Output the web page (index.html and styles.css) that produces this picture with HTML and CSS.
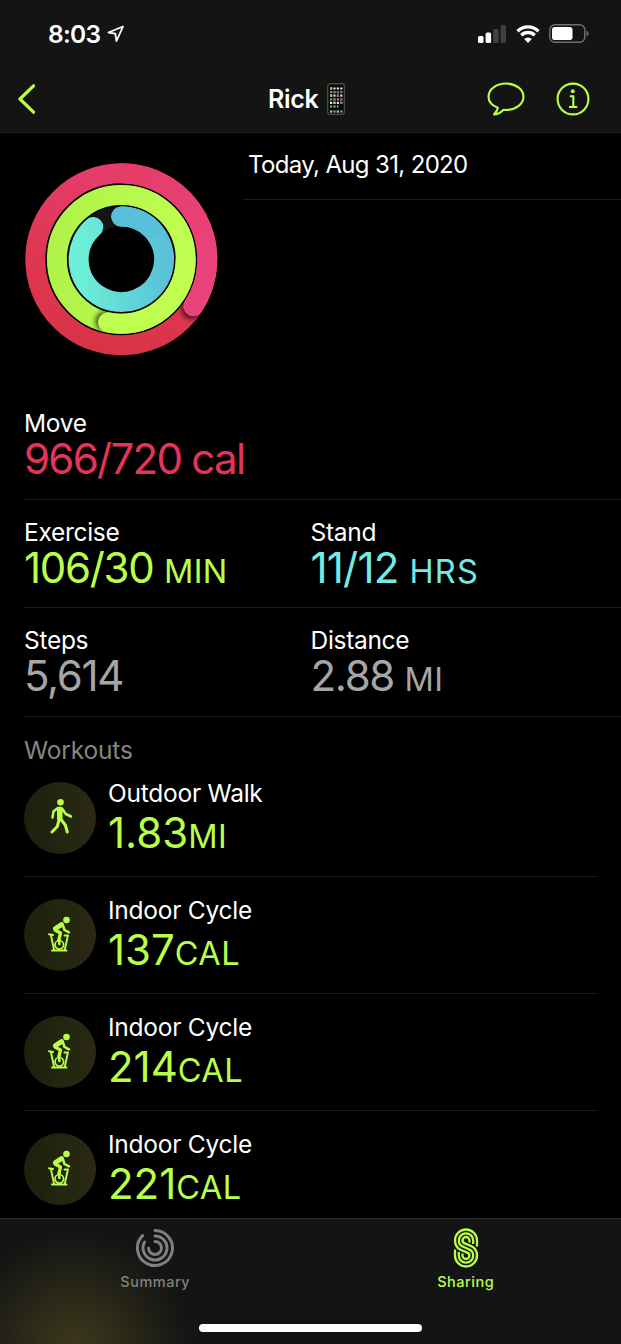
FILE: index.html
```html
<!DOCTYPE html>
<html lang="en">
<head>
  <meta charset="UTF-8">
  <title>Activity Sharing</title>
  <meta name="viewport" content="width=device-width, initial-scale=1.0">
  <link rel="stylesheet" href="styles.css">
</head>
<body>
  <svg class="defs" width="0" height="0">
    <symbol id="bike" viewBox="0 0 24 36">
      <circle cx="18.500" cy="4" r="3.300" fill="currentColor"/>
      <g fill="none" stroke="currentColor" stroke-linecap="round" stroke-linejoin="round">
        <path d="M13.500 8.700 7.500 12.500" stroke-width="5"/>
        <path d="M15 9.500 16.500 14l4.500 2.300" stroke-width="2.500"/>
        <path d="M7 14l5.500 3-1.700 7" stroke-width="3.200"/>
        <path d="M1 18.300l4 .7M3 19.500l3 14M19.800 20l-3 13.500M16.500 19.500h3.500M4 34.500h14.500" stroke-width="1.900"/>
        <circle cx="11.300" cy="28.800" r="4.300" stroke-width="1.700"/>
        <path d="M11.300 22v6" stroke-width="2.500"/>
      </g>
    </symbol>
  </svg>

  <header class="top">
    <div class="status">
      <span class="time">8:03</span>
      <svg class="arrow" width="18" height="18" viewBox="0 0 18 18"><path d="M1.500 7.500 16 1.500 9.500 16 8.300 8.700Z" fill="none" stroke="#fff" stroke-width="1.800" stroke-linejoin="round"/></svg>
      <svg class="signal" width="28" height="18" viewBox="0 0 28 18">
        <rect x="0" y="11" width="5.500" height="7" rx="1.500" fill="#fff"/>
        <rect x="7.600" y="7.500" width="5.500" height="10.500" rx="1.500" fill="#fff"/>
        <rect x="15.200" y="4" width="5.500" height="14" rx="1.500" fill="#3f4141"/>
        <rect x="22.600" y="0" width="5.400" height="18" rx="1.500" fill="#3f4141"/>
      </svg>
      <svg class="wifi" width="24" height="18" viewBox="0 0 24 18">
        <path d="M1.500 6.200a15 15 0 0 1 21 0M5.300 10.200a9.600 9.600 0 0 1 13.400 0" fill="none" stroke="#fff" stroke-width="3.300"/>
        <path d="M12 18 8.200 14.100a5.500 5.500 0 0 1 7.600 0Z" fill="#fff"/>
      </svg>
      <svg class="battery" width="40" height="20" viewBox="0 0 40 20">
        <rect x=".8" y=".8" width="35" height="17.500" rx="5" fill="none" stroke="#717171" stroke-width="1.400"/>
        <rect x="3" y="3" width="20.500" height="13" rx="2.800" fill="#fff"/>
        <path d="M37.500 6.500v6q2-.8 2-3t-2-3Z" fill="#717171"/>
      </svg>
    </div>
    <nav class="nav">
      <svg class="back" width="18" height="30" viewBox="0 0 18 30"><path d="M16.500 1.800 3 15l13.500 13.200" fill="none" stroke="currentColor" stroke-width="3.200" stroke-linecap="round" stroke-linejoin="round"/></svg>
      <h1>Rick</h1>
      <svg class="phone" width="18" height="32" viewBox="0 0 18 32">
        <rect x=".7" y=".7" width="16.600" height="30.600" rx="2.500" fill="#050505" stroke="#474b4b" stroke-width="1.400"/>
        <g fill="none" stroke-width="2.200">
          <path d="M3 5.500h12.500" stroke="#e8e8e8" stroke-dasharray="2.200 1.200"/>
          <path d="M3 9.100h12.500" stroke="#659fa5" stroke-dasharray="2.200 1.200"/>
          <path d="M3 12.700h12.500" stroke="#ddd" stroke-dasharray="2.200 1.200"/>
          <path d="M3 16.300h12.500" stroke="#59a7ae" stroke-dasharray="2.200 1.200"/>
          <path d="M3 19.900h12.500" stroke="#ddd" stroke-dasharray="2.200 1.200"/>
          <path d="M3 23.500h8.500" stroke="#62b8c0" stroke-dasharray="2.200 1.200"/>
          <path d="M3 28.500h12.500" stroke="#72b7b9" stroke-dasharray="2.200 1.200"/>
          <path d="M3 5.500h2.200M3 12.700h2.200M6.400 19.900h2.200M3 28.500h2.200M9.800 28.500h2.200" stroke="#9bc63f"/>
          <path d="M9.800 12.700h2.200M13.200 16.300h2.200M6.400 23.500h2.200" stroke="#e33759"/>
          <path d="M6.400 9.100h5.600M6.400 16.300h2.200M13.200 19.900h2.200" stroke="#777" stroke-dasharray="2.200 1.200"/>
        </g>
      </svg>
      <svg class="bubble" width="38" height="34" viewBox="0 0 38 34"><path d="M10.800 25.800C5 23.500 1.500 19.500 1.500 14.800 1.500 7.400 9.300 1.500 19 1.500s17.500 5.900 17.500 13.300S28.700 28 19 28c-1 0-1.800 0-2.700-.1-2.300 2.300-5.800 4.300-9.300 4.500 1.800-2 3.500-4.200 3.800-6.600Z" fill="none" stroke="currentColor" stroke-width="2.100" stroke-linejoin="round"/></svg>
      <svg class="info" width="34" height="34" viewBox="0 0 34 34">
        <circle cx="17" cy="17" r="15.400" fill="none" stroke="currentColor" stroke-width="2.100"/>
        <circle cx="16.800" cy="9.300" r="2" fill="currentColor"/>
        <path d="M13.800 14.300h3.500v10.200M13 25h8.300" fill="none" stroke="currentColor" stroke-width="2.100"/>
      </svg>
    </nav>
  </header>

  <main>
    <section class="hero">
      <svg class="rings" width="194" height="194" viewBox="-97.300 -97.300 194 194">
        <defs>
          <linearGradient id="move" gradientUnits="userSpaceOnUse" x1="0" y1="96" x2="40" y2="-96">
            <stop offset="0" stop-color="#d93348"/>
            <stop offset=".35" stop-color="#de3650"/>
            <stop offset="1" stop-color="#e73d6f"/>
          </linearGradient>
          <linearGradient id="moveEnd" gradientUnits="userSpaceOnUse" x1="0" y1="-86" x2="70" y2="0">
            <stop offset="0" stop-color="#e63c69"/>
            <stop offset="1" stop-color="#ea427a"/>
          </linearGradient>
          <linearGradient id="exercise" gradientUnits="userSpaceOnUse" x1="-75" y1="0" x2="65" y2="20">
            <stop offset="0" stop-color="#aff249"/>
            <stop offset="1" stop-color="#bfff50"/>
          </linearGradient>
          <linearGradient id="stand" gradientUnits="userSpaceOnUse" x1="-40" y1="0" x2="45" y2="0">
            <stop offset="0" stop-color="#6cefd6"/>
            <stop offset="1" stop-color="#5ac1da"/>
          </linearGradient>
          <filter id="soft" x="-50%" y="-50%" width="200%" height="200%"><feGaussianBlur stdDeviation="2.500"/></filter>
          <mask id="moveTrack" maskUnits="userSpaceOnUse" x="-97" y="-97" width="194" height="194"><circle r="86" fill="none" stroke="#fff" stroke-width="20"/></mask>
          <mask id="exerciseTrack" maskUnits="userSpaceOnUse" x="-97" y="-97" width="194" height="194"><circle r="64.400" fill="none" stroke="#fff" stroke-width="20"/></mask>
        </defs>
        <g fill="none" stroke-width="20" stroke-linecap="round">
          <circle r="86" stroke="url(#move)"/>
          <circle cx="70" cy="50" r="10" fill="#000" opacity=".65" filter="url(#soft)" mask="url(#moveTrack)"/>
          <path d="M0-86A86 86 0 0 1 72 47" stroke="url(#moveEnd)"/>
          <circle r="64.400" stroke="url(#exercise)"/>
          <circle cx="-16" cy="62" r="10" fill="#000" opacity=".65" filter="url(#soft)" mask="url(#exerciseTrack)"/>
          <path d="M64.400 0A64.400 64.400 0 0 1-13.200 63" stroke="#c0ff50"/>
          <circle r="42.700" stroke="#141414"/>
          <path d="M0-42.700A42.700 42.700 0 1 1-28-32.200" stroke="url(#stand)"/>
          <path d="M0-42.700A42.700 42.700 0 0 1 30.200-30.200" stroke="#59c0db"/>
        </g>
      </svg>
      <p class="date">Today, Aug 31, 2020</p>
    </section>

    <section class="stats">
      <div class="stat-row">
        <div class="stat move"><h2>Move</h2><p>966/720 cal</p></div>
      </div>
      <div class="stat-row">
        <div class="stat exercise"><h2>Exercise</h2><p>106/30 <small>MIN</small></p></div>
        <div class="stat stand"><h2>Stand</h2><p>11/12 <small>HRS</small></p></div>
      </div>
      <div class="stat-row">
        <div class="stat steps"><h2>Steps</h2><p>5,614</p></div>
        <div class="stat distance"><h2>Distance</h2><p>2.88 <small>MI</small></p></div>
      </div>
    </section>

    <section class="workouts">
      <h2>Workouts</h2>
      <div class="workout">
        <div class="badge">
          <svg class="walk" width="24" height="36" viewBox="0 0 24 36">
            <circle cx="12.500" cy="3.300" r="3.300" fill="currentColor"/>
            <g fill="none" stroke="currentColor" stroke-linecap="round" stroke-linejoin="round">
              <path d="M11.800 10.300v9" stroke-width="5.500"/>
              <path d="M9.500 9.300 5.500 12.500l-1 6M14 9.500l3.800 5.500 5.200 2.500" stroke-width="2.500"/>
              <path d="M11 21 9.300 27.500 4 33M13 20.500l4.300 5.500 2 7" stroke-width="3"/>
            </g>
          </svg>
        </div>
        <div class="workout-text"><h3>Outdoor Walk</h3><p>1.83<small>MI</small></p></div>
      </div>
      <div class="workout">
        <div class="badge"><svg class="cycle" width="24" height="36"><use href="#bike"/></svg></div>
        <div class="workout-text"><h3>Indoor Cycle</h3><p>137<small>CAL</small></p></div>
      </div>
      <div class="workout">
        <div class="badge"><svg class="cycle" width="24" height="36"><use href="#bike"/></svg></div>
        <div class="workout-text"><h3>Indoor Cycle</h3><p>214<small>CAL</small></p></div>
      </div>
      <div class="workout">
        <div class="badge"><svg class="cycle" width="24" height="36"><use href="#bike"/></svg></div>
        <div class="workout-text"><h3>Indoor Cycle</h3><p>221<small>CAL</small></p></div>
      </div>
    </section>
  </main>

  <footer class="tabs">
    <div class="tab">
      <svg width="40" height="40" viewBox="-20 -20 40 40">
        <g fill="none" stroke="currentColor" stroke-width="3" stroke-linecap="round">
          <path d="M0-17.500A17.500 17.500 0 1 1-12.400-12.400"/>
          <path d="M0-12A12 12 0 1 1-10.400-6"/>
          <path d="M0-6.500A6.500 6.500 0 1 1-6.500 0"/>
        </g>
      </svg>
      <span>Summary</span>
    </div>
    <div class="tab active">
      <svg width="26" height="40" viewBox="0 0 26 40">
        <g fill="none" stroke="currentColor" stroke-width="2.300">
          <path d="M24 18.500V12.500A11 11 0 0 0 2 12.500C2 20 7 21.800 11.200 23.300 15 24.800 16.500 25 16.500 27.500A3.500 3.500 0 0 1 9.500 27.500V25.500"/>
          <path d="M20.200 16V12.500A7.200 7.200 0 0 0 5.800 12.500C5.800 17.500 9 18.300 13 20S20.200 22.500 20.200 27.500A7.200 7.200 0 0 1 5.800 27.500V24"/>
          <path d="M16.500 14.500V12.500A3.500 3.500 0 0 0 9.500 12.500C9.500 15 11 15.200 14.800 16.700 19 18.200 24 20 24 27.500A11 11 0 0 1 2 27.500V21.500"/>
        </g>
      </svg>
      <span>Sharing</span>
    </div>
    <div class="home-bar"></div>
  </footer>
</body>
</html>
```
FILE: styles.css
```css
* {
  box-sizing: border-box;
}
body {
  margin: 0;
  height: 1344px;
  display: flex;
  flex-direction: column;
  overflow: hidden;
  background: #000;
  color: #fff;
  font-family: Inter, "Liberation Sans", sans-serif;
}
h1, h2, h3, p {
  margin: 0;
  font-weight: 400;
}
svg {
  display: block;
  flex: none;
}
.defs {
  position: absolute;
}

/* header */
.top {
  flex: none;
  height: 133px;
  background: #141414;
  border-bottom: 1px solid #1b1b1b;
}
.status {
  height: 67px;
  display: flex;
  align-items: center;
  padding: 0 32px 0 48px;
}
.time {
  font-size: 24.5px;
  font-weight: 600;
  letter-spacing: -0.7px;
  width: 59px;
}
.signal {
  margin-left: auto;
}
.wifi {
  margin: 0 9px 0 10px;
}
.nav {
  height: 65px;
  display: flex;
  align-items: center;
  padding: 0 31.3px 1px 17px;
  color: #b9ff49;
}
.nav h1 {
  margin-left: 233px;
  width: 59px;
  color: #fff;
  font-size: 25px;
  font-weight: 600;
  letter-spacing: -0.3px;
}
.bubble {
  margin-left: auto;
}
.info {
  margin-left: 31px;
}

/* rings and date */
main {
  flex: 1;
  min-height: 0;
  overflow: hidden;
}
.hero {
  height: 258px;
  display: flex;
  align-items: flex-start;
  padding-left: 24px;
}
.rings {
  margin-top: 29px;
}
.date {
  flex: 1;
  height: 67px;
  margin-left: 25px;
  padding-left: 5px;
  border-bottom: 1px solid #1b1b1b;
  font-size: 24px;
  line-height: 64px;
  letter-spacing: -0.65px;
}

/* stats */
.stats {
  margin-left: 24px;
}
.stat-row {
  height: 108.5px;
  display: grid;
  grid-template-columns: 286.5px 1fr;
  border-bottom: 1px solid #1b1b1b;
}
.stat h2 {
  margin-top: 16px;
  font-size: 24.5px;
  line-height: 32px;
  letter-spacing: -0.3px;
}
.stat p,
.workout p {
  font-size: 42px;
  line-height: 40px;
  white-space: nowrap;
}
.stat p {
  letter-spacing: -1.3px;
}
small {
  font-size: 32.5px;
  letter-spacing: 0.4px;
}
.stat.move p {
  color: #e5345b;
  letter-spacing: -1.7px;
}
.exercise p,
.workout p {
  color: #b9ff49;
}
.stat.stand p {
  color: #74e9e8;
  letter-spacing: -0.8px;
}
.stand small {
  letter-spacing: 1.2px;
}
.steps p,
.distance p {
  color: #a6a6a6;
}

/* workouts */
.workouts {
  padding: 0 24px;
}
.workouts h2 {
  height: 43px;
  padding-top: 17px;
  font-size: 24.5px;
  line-height: 32px;
  letter-spacing: -0.15px;
  color: #858585;
}
.workout {
  height: 117px;
  display: flex;
  border-bottom: 1px solid #1b1b1b;
}
.badge {
  width: 72px;
  height: 72px;
  margin: 22px 12px 0 0;
  border-radius: 50%;
  background: linear-gradient(to right, #1b210c, #2b2a13);
  color: #b9ff49;
  display: flex;
  align-items: center;
  justify-content: center;
}
.badge svg {
  margin-top: -1px;
}
.workout h3 {
  margin-top: 17px;
  font-size: 24.5px;
  line-height: 32px;
  letter-spacing: -0.25px;
}
.workout p {
  margin-top: 4px;
}

/* tab bar */
.tabs {
  flex: none;
  position: relative;
  height: 126px;
  display: flex;
  border-top: 1px solid #2c2c2a;
  background: radial-gradient(circle at 75px 130px, #3a3718 0, #35321a 25px, #141414 115px);
}
.tab {
  flex: 1;
  display: flex;
  flex-direction: column;
  align-items: center;
  padding-top: 9px;
  color: #808080;
  font-size: 14.5px;
  font-weight: 500;
  letter-spacing: 0.5px;
}
.tab span {
  margin-top: 5px;
}
.tab.active {
  color: #b9ff49;
}
.home-bar {
  position: absolute;
  left: 199px;
  bottom: 12px;
  width: 223px;
  height: 8px;
  border-radius: 4px;
  background: #fff;
}
```
